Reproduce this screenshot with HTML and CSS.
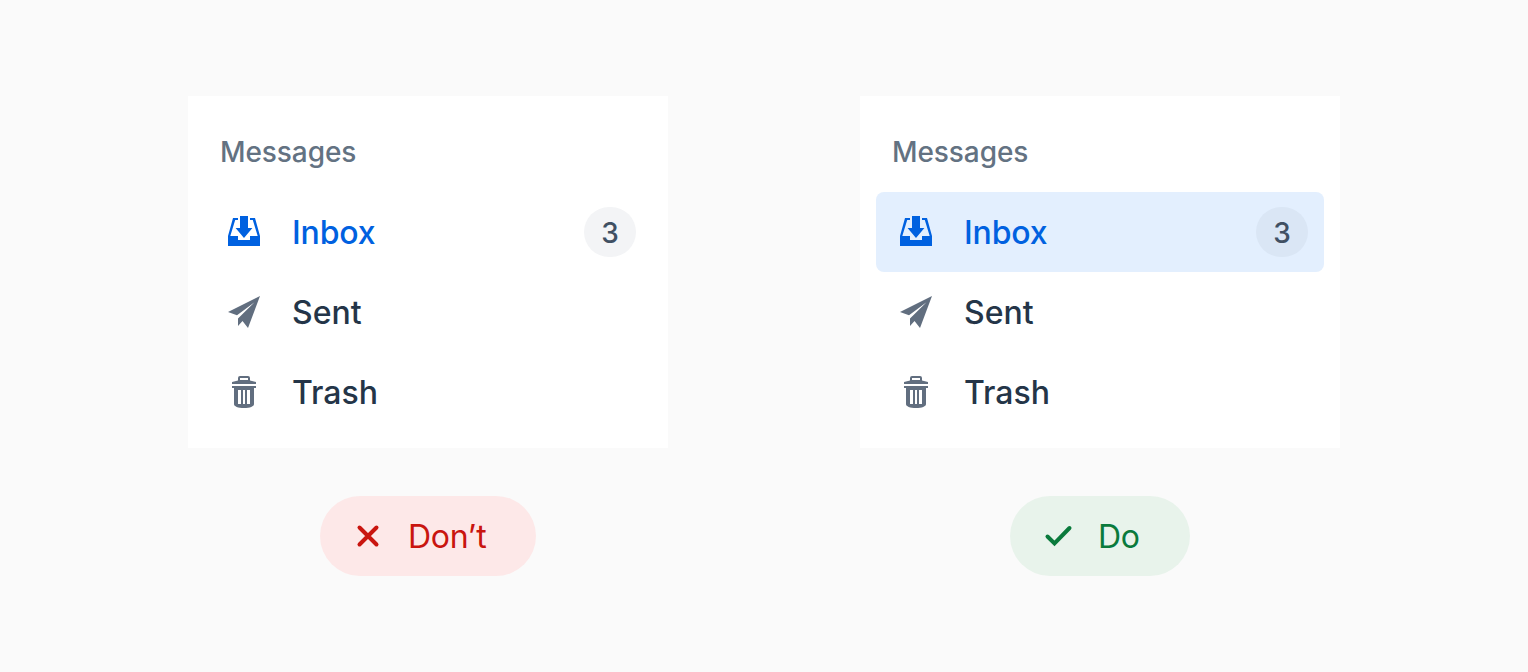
FILE: index.html
```
<!DOCTYPE html>
<html lang="en">
<head>
<meta charset="utf-8">
<title>Navigation selection</title>
<link rel="stylesheet" href="styles.css">
</head>
<body>
<svg class="defs" width="0" height="0">
  <symbol id="inbox" viewBox="0 0 32 32"><path d="M12 0h8v12h4.400L16 22 7.600 12H12zM5 2h5v2H7.200L2.300 20H10v4h12v-4h7.700L24.800 4H22V2h5l5 18v10H0V20z"/></symbol>
  <symbol id="sent" viewBox="0 0 32 32"><path d="M32 0 0 15.900l9 3.300L26.500 6.200 10 22.500V30l4.500-5L20 32z"/></symbol>
  <symbol id="trash" viewBox="0 0 32 32"><path fill-rule="evenodd" d="M10 4.500V2q0-2 2-2h8q2 0 2 2v2.500l6 1.500v2H4V6zm2-.5h8V2h-8zM4 10h24v2h-2v16c0 2.500-4 4-10 4S6 30.500 6 28V12H4zm6 4v14h3V14zm5 0v14h2V14zm4 0v14h3V14z"/></symbol>
</svg>
<main class="board">
  <section class="example">
    <div class="panel">
      <h2 class="heading">Messages</h2>
      <div class="item current"><svg class="icon"><use href="#inbox"/></svg><span class="label">Inbox</span><span class="badge">3</span></div>
      <div class="item"><svg class="icon"><use href="#sent"/></svg><span class="label">Sent</span></div>
      <div class="item"><svg class="icon"><use href="#trash"/></svg><span class="label">Trash</span></div>
    </div>
    <div class="verdict dont"><svg class="mark" viewBox="0 0 32 32"><path d="M7.500 7.500l17 17m0-17l-17 17"/></svg><span>Don’t</span></div>
  </section>
  <section class="example">
    <div class="panel">
      <h2 class="heading">Messages</h2>
      <div class="item current filled"><svg class="icon"><use href="#inbox"/></svg><span class="label">Inbox</span><span class="badge">3</span></div>
      <div class="item"><svg class="icon"><use href="#sent"/></svg><span class="label">Sent</span></div>
      <div class="item"><svg class="icon"><use href="#trash"/></svg><span class="label">Trash</span></div>
    </div>
    <div class="verdict do"><svg class="mark" viewBox="0 0 32 32"><path d="M5.500 16.500l7 7L27.500 8"/></svg><span>Do</span></div>
  </section>
</main>
</body>
</html>
```
FILE: styles.css
```
* { box-sizing: border-box; }
body { margin: 0; background: #fafafa; font-family: Inter, "Liberation Sans", sans-serif; }
.defs { display: block; }
.board { display: flex; justify-content: center; gap: 192px; height: 672px; padding-top: 96px; }
.example { display: flex; flex-direction: column; align-items: center; gap: 48px; width: 480px; }
.panel { width: 480px; height: 352px; padding: 16px; background: #fff; }
.heading { margin: 0; height: 80px; padding-left: 16px; font-size: 28px; line-height: 80px; font-weight: 500; letter-spacing: -0.08px; color: #637282; }
.item { display: flex; align-items: center; height: 80px; padding: 0 16px 0 24px; border-radius: 8px; color: #243548; }
.icon { width: 32px; height: 32px; margin-right: 32px; fill: #616e7f; }
.label { padding-top: 2px; font-size: 32px; line-height: 48px; font-weight: 500; }
.current { color: #0061e0; }
.current .icon { fill: #0061e0; }
.current .label { letter-spacing: -0.15px; }
.filled { background: #e3effe; }
.badge { width: 52px; height: 50px; margin-left: auto; border-radius: 26px; background: #f3f4f6; color: #405063; font-size: 28px; line-height: 52px; font-weight: 500; text-align: center; }
.filled .badge { background: #dae6f5; }
.verdict { display: flex; align-items: center; height: 80px; padding: 0 48px 0 32px; border-radius: 40px; font-size: 32px; line-height: 48px; letter-spacing: -0.3px; }
.verdict span { padding-top: 2px; }
.mark { width: 32px; height: 32px; margin-right: 24px; fill: none; stroke: currentColor; stroke-width: 4; stroke-linecap: round; stroke-linejoin: miter; }
.dont { width: 216px; background: #fde8e8; color: #c9150f; }
.do { width: 180px; background: #e8f3eb; color: #0a7a3c; }
```
